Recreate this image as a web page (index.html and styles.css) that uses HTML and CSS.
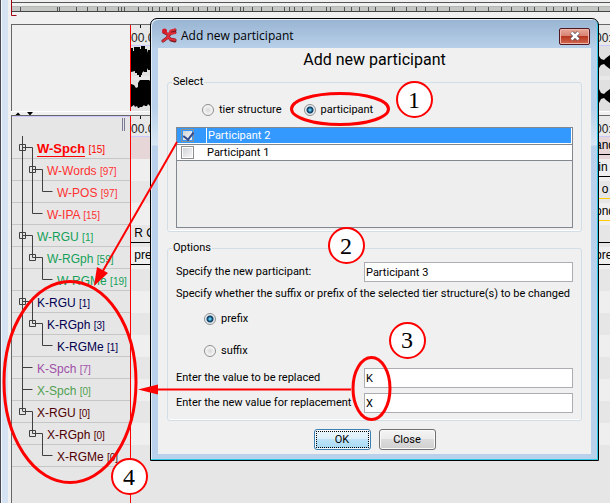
FILE: index.html
```html
<!DOCTYPE html>
<html lang="en">
<head>
<meta charset="utf-8">
<title>Add new participant</title>
<link rel="stylesheet" href="styles.css">
</head>
<body>
<main class="app">
  <div class="overview">
    <svg class="ticks" width="100%" height="24" aria-hidden="true">
      <path d="M11 2.5H4000" stroke="#555"/>
      <path d="M11 6.5H4000" stroke="#b4b8b4"/>
      <path d="M11 9H4000" stroke="#c4c6c4" stroke-width="4"/>
      <path d="M11 11.5H4000" stroke="#444"/>
      <path d="M20.500 7v4M57.500 7v4M59.500 7v4M76.500 7v4M87.500 7v4M97.500 7v4M105.500 7v4M118.500 7v4M121.500 7v4M124.500 7v4M138.500 7v4M148.500 7v4M152.500 7v4M159.500 7v4M166.500 7v4M172.500 7v4M178.500 7v4M193.500 7v4M198.500 7v4M207.500 7v4M215.500 7v4M219.500 7v4M232.500 7v4M240.500 7v4M243.500 7v4M252.500 7v4M261.500 7v4M272.500 7v4M284.500 7v4M289.500 7v4M294.500 7v4M302.500 7v4M311.500 7v4M326.500 7v4M330.500 7v4M344.500 7v4M351.500 7v4M359.500 7v4M368.500 7v4M375.500 7v4M392.500 7v4M394.500 7v4M406.500 7v4M416.500 7v4M425.500 7v4M437.500 7v4M449.500 7v4M463.500 7v4M475.500 7v4M488.500 7v4M501.500 7v4M511.500 7v4M524.500 7v4M527.500 7v4M534.500 7v4M546.500 7v4M553.500 7v4M563.500 7v4M566.500 7v4M571.500 7v4M577.500 7v4M598.500 7v4" stroke="#555"/>
      <path d="M11.500 0v15.500h5" fill="none" stroke="#a00010"/>
    </svg>
  </div>

  <section class="media">
    <div class="media-left"></div>
    <div class="wave">
      <div class="ruler"><span>00.0</span><span class="end">00:</span></div>
      <div class="tracks">
        <svg width="19" height="65" aria-hidden="true"><path d="M0 2h2v3h1V1h6v2h1V0h4v3h2v4l1-3h2v20h-2l-1-2v4h-3v-1l-2 2v2h-1v2H8v-2H6v-2H4v-2l-4 1zM0 38l3 1 2 3 2-1v-4l2-3h9l1 1v25l-2-2-1 2h-2l-1-1-2 2H9l-1 1H7l-1-2-2 1-1-2-3 2z"/></svg>
        <svg width="11" height="65" aria-hidden="true"><path d="M0 10l2 3 3 1 2-2 4-3v14l-4-3-2-2-3 1-2 3zM0 43l2 4 3 1 2-2 4-3v14l-4-3-2-2-3 1-2 4z"/></svg>
      </div>
    </div>
  </section>

  <div class="splitter"><svg width="24" height="4" aria-hidden="true"><path d="M0 3.500 3 .500 6 3.500zM12 0h6l-3 3.500z"/></svg></div>

  <section class="tiers">
    <div class="tree">
      <div class="tree-head"><span class="grip"></span></div>
      <ul class="tree-list">
        <li class="d0 active"><b>W-Spch</b> <small>[15]</small></li>
        <li class="d1 red">W-Words <small>[97]</small></li>
        <li class="d2 red">W-POS <small>[97]</small></li>
        <li class="d1 red">W-IPA <small>[15]</small></li>
        <li class="d0 green">W-RGU <small>[1]</small></li>
        <li class="d1 green">W-RGph <small>[59]</small></li>
        <li class="d2 green">W-RGMe <small>[19]</small></li>
        <li class="d0 navy">K-RGU <small>[1]</small></li>
        <li class="d1 navy">K-RGph <small>[3]</small></li>
        <li class="d2 navy">K-RGMe <small>[1]</small></li>
        <li class="d0 purple">K-Spch <small>[7]</small></li>
        <li class="d0 leaf">X-Spch <small>[0]</small></li>
        <li class="d0 maroon">X-RGU <small>[0]</small></li>
        <li class="d1 maroon">X-RGph <small>[0]</small></li>
        <li class="d2 maroon">X-RGMe <small>[0]</small></li>
      </ul>
      <svg class="lines" width="60" height="350" aria-hidden="true">
        <g fill="none" stroke="#404040">
          <path d="M10.500 19V294M10.500 250.500h10M10.500 272.500h10"/>
          <path d="M10.500 30.500h10v66h10M20.500 52.500h10v22h10"/>
          <path d="M10.500 118.500h10v22h10v22h10"/>
          <path d="M10.500 184.500h10v22h10v22h10"/>
          <path d="M10.500 294.500h10v22h10v22h10"/>
          <path d="M7.500 27.500h6v6h-6zM17.500 49.500h6v6h-6zM7.500 115.500h6v6h-6zM17.500 137.500h6v6h-6zM7.500 181.500h6v6h-6zM17.500 203.500h6v6h-6zM7.500 291.500h6v6h-6zM17.500 313.500h6v6h-6z"/>
        </g>
      </svg>
    </div>
    <div class="timeline">
      <div class="ruler"><span>00.0</span><span class="end">00:</span></div>
      <div class="lane pink"><span></span><span class="end line">and</span></div>
      <div class="lane"><span></span><span class="end line">&nbsp;in</span></div>
      <div class="lane"><span></span><span class="end line gold">&nbsp;&nbsp;o</span></div>
      <div class="lane"><span></span><span class="end line gold">ond</span></div>
      <div class="lane"><span class="line">&nbsp;R G</span><span class="end line"></span></div>
      <div class="lane"><span class="line">&nbsp;pre</span><span class="end line">pre</span></div>
      <div class="lane"></div><div class="lane"></div><div class="lane"></div>
      <div class="lane"></div><div class="lane"></div><div class="lane"></div>
      <div class="lane"></div><div class="lane"></div><div class="lane"></div>
    </div>
  </section>
</main>

<form class="dialog">
  <header class="titlebar">
    <svg width="16" height="16" viewBox="0 0 16 16" aria-hidden="true">
      <path d="M3 4.500 8 7l6-5M8 7l-2 3-4 3M7 8l2 3 5 1M9 5l5-.500M10 12l4 1" fill="none" stroke="#7a1a20" stroke-width="3" stroke-linecap="round"/>
      <path d="M3 4 8 6.500 9.500 2.500 14 1.500M8 6.500 6 10l-4 3M7 8l2 3 5 1M8 6l6-1" fill="none" stroke="#e22c38" stroke-width="2" stroke-linecap="round"/>
      <circle cx="3.500" cy="3" r="2.500" fill="#d41a28"/>
    </svg>
    <span>Add new participant</span>
    <button type="button" class="close" aria-label="Close window">
      <svg width="12" height="10" viewBox="0 0 12 10" aria-hidden="true"><path d="M2.500 1.500l7 7M9.500 1.500l-7 7" stroke="#5a4a58" stroke-width="4"/><path d="M2.500 1.500l7 7M9.500 1.500l-7 7" stroke="#fff" stroke-width="2.500"/></svg>
    </button>
  </header>
  <div class="content">
    <h1>Add new participant</h1>
    <fieldset class="select">
      <legend>Select</legend>
      <div class="kinds">
        <label><input type="radio" name="kind">tier structure</label>
        <label><input type="radio" name="kind" checked>participant</label>
      </div>
      <div class="listbox">
        <table>
          <tr class="chosen"><td><input type="checkbox" id="p2" checked></td><td><label for="p2">Participant 2</label></td></tr>
          <tr><td><input type="checkbox" id="p1"></td><td><label for="p1">Participant 1</label></td></tr>
        </table>
      </div>
    </fieldset>
    <fieldset class="options">
      <legend>Options</legend>
      <div class="row"><label for="name">Specify the new participant:</label><input type="text" id="name" value="Participant 3"></div>
      <p>Specify whether the suffix or prefix of the selected tier structure(s) to be changed</p>
      <div class="affix">
        <label><input type="radio" name="affix" checked>prefix</label>
        <label><input type="radio" name="affix">suffix</label>
      </div>
      <div class="row"><label for="old">Enter the value to be replaced</label><input type="text" id="old" value="K"></div>
      <div class="row"><label for="new">Enter the new value for replacement</label><input type="text" id="new" value="X"></div>
    </fieldset>
    <div class="buttons"><button type="button" class="btn ok">OK</button><button type="button" class="btn">Close</button></div>
  </div>
</form>

<svg class="callouts" width="610" height="503" aria-hidden="true">
  <g fill="none" stroke="#f00" stroke-width="3">
    <ellipse cx="340" cy="109" rx="48.500" ry="15.500"/>
    <ellipse cx="70" cy="382" rx="66" ry="100.500"/>
    <ellipse cx="371.500" cy="388.500" rx="18.500" ry="31"/>
  </g>
  <path d="M177 142 100 276M351 389.500H155" stroke="#f00" stroke-width="2"/>
  <path d="M94 286l3-19 11 6zM138 389.500l20-5v10z" fill="#f00"/>
  <g fill="#fff" stroke="#f00" stroke-width="2">
    <circle cx="414.500" cy="99.500" r="17.500"/><circle cx="346.500" cy="245.500" r="17.500"/><circle cx="407.500" cy="340.500" r="17.500"/><circle cx="129.500" cy="476.500" r="17.500"/>
  </g>
  <g class="digits"><text x="414" y="108">1</text><text x="346" y="254">2</text><text x="407" y="348">3</text><text x="129" y="485">4</text></g>
</svg>
</body>
</html>
```
FILE: styles.css
```css
* { box-sizing: border-box; }

body {
  margin: 0;
  min-height: 100vh;
  position: relative;
  overflow: hidden;
  background: #f0f0f0;
  color: #000;
  font: 11px/14px Roboto, Tahoma, sans-serif;
}

svg { display: block; }

/* Main window */
.app {
  min-height: 100vh;
  display: flex;
  flex-direction: column;
  border-left: 1px solid #4a4a54;
  padding-left: 10px;
  background: linear-gradient(90deg, #f4f8fc 1px, #d6e3f2 1px, #d6e3f2 7px, #f0f0f0 7px);
}

.overview { height: 24px; overflow: hidden; margin-left: -11px; }

.media {
  display: flex;
  height: 87px;
  border-top: 1px solid #666;
  border-left: 1px solid #666;
}

.media-left { width: 118px; }

.wave, .timeline {
  flex: 1;
  min-width: 0;
  border-left: 1px solid #f00;
}

.ruler {
  display: flex;
  justify-content: space-between;
  height: 21px;
  padding-top: 5px;
  background: linear-gradient(#111, #111) 9px 0 / 1px 3px no-repeat, #e8e8e8;
  border-bottom: 1px solid #c8c8ff;
  font: 12px/16px "Liberation Sans", Arial, sans-serif;
  color: #222;
}

.ruler span { width: 19px; overflow: hidden; }
.ruler .end { width: 15px; }

.tracks {
  display: flex;
  justify-content: space-between;
  height: 65px;
  background: linear-gradient(#e0e0e0 30px, #e8e8e8 30px, #e8e8e8 34px, #e0e0e0 34px);
}

.splitter {
  height: 4px;
  border-top: 1px solid #fff;
  padding-left: 4px;
}

.tiers {
  flex: 1;
  display: flex;
  border-top: 1px solid #666;
  border-left: 1px solid #666;
  background: #e6e6e6;
  font: 12px/21px "Liberation Sans", Arial, sans-serif;
}

.tree { width: 118px; position: relative; }

.tree-head {
  height: 21px;
  border-top: 1px solid #c8c8ff;
  display: flex;
  justify-content: flex-end;
  padding: 1px 5px;
}

.grip {
  width: 3px;
  height: 13px;
  border: 1px solid #7a7a96;
  border-width: 0 1px;
}

.tree-list { margin: 0; padding: 0; list-style: none; }

.tree-list li {
  height: 22px;
  border-bottom: 1px solid #c6c6c6;
  padding: 2px 0 0 25px;
  white-space: nowrap;
}

.tree-list .d1 { padding-left: 35px; }
.tree-list .d2 { padding-left: 45px; }
.tree-list small { font-size: 10px; }
.tree-list b { display: inline-block; font-size: 13px; line-height: 15px; border-bottom: 1px solid #f00; }
.active { color: #f00; }
.red { color: #ff3232; }
.green { color: #14a058; }
.navy { color: #000050; }
.purple { color: #a050a8; }
.leaf { color: #50a050; }
.maroon { color: #500000; }

.lines { position: absolute; top: 1px; left: 0; }

.lane {
  display: flex;
  justify-content: space-between;
  height: 22px;
  font-size: 12px;
  line-height: 16px;
}

.lane:nth-child(odd) { background: #efefef; }
.lane.pink { background: #e6d6d8; }
.lane span { width: 19px; height: 18px; overflow: hidden; white-space: nowrap; }
.lane .end { width: 15px; }
.lane .line { border-bottom: 1px solid #000; }
.lane .gold { border-color: #fc0; }

/* Dialog window */
.dialog {
  position: absolute;
  top: 18px;
  left: 150px;
  right: 11px;
  padding: 0 7px 6px;
  border: 1px solid #000;
  border-radius: 7px 7px 0 0;
  background: linear-gradient(#98b4d2, #b9d1ea 30px, #b9d1ea 90px, #d8e6f4 126px, #b9d1ea 127px);
  box-shadow: inset -1px -1px #2cc8e4, inset 1px 1px #e4eef8;
}

.titlebar {
  display: flex;
  align-items: center;
  height: 29px;
  padding: 5px 1px 0 3px;
  font: 12px/16px "Open Sans", "Segoe UI", sans-serif;
}

.titlebar span { flex: 1; margin-left: 4px; }

.close {
  width: 31px;
  height: 17px;
  padding: 0;
  display: grid;
  place-items: center;
  border: 1px solid #501820;
  border-radius: 2px;
  background: linear-gradient(#e8a898, #d88474 45%, #b83820 50%, #d06850);
  box-shadow: inset 0 0 0 1px #f0b8ac;
}

.content {
  padding: 0 9px 4px;
  background: #f0f0f0;
}

h1 {
  margin: 0 0 3px;
  font-size: 16px;
  line-height: 24px;
  font-weight: normal;
  text-align: center;
}

fieldset {
  margin: 0;
  min-width: 0;
  border: 1px solid #d2dde6;
  border-radius: 3px;
  box-shadow: inset 0 -1px #fff;
}

legend { margin-left: -4px; padding: 0 1px; line-height: 14px; }
.select { padding: 11px 8px 3px; margin-bottom: 9px; }
.options { padding: 7px 8px; }

.kinds { display: flex; gap: 22px; height: 20px; margin: 0 0 7px 26px; }
.kinds label, .affix label { display: flex; align-items: center; gap: 5px; height: 20px; }

input[type="radio"] {
  appearance: none;
  width: 12px;
  height: 12px;
  margin: 0;
  border: 1px solid #8e8f8f;
  border-radius: 50%;
  background: radial-gradient(circle, #d8d8d8, #f4f4f4 60%);
}

input[type="radio"]:checked {
  background: radial-gradient(circle at 50% 50%, #5cc8ec 1px, #1c5a84 2px, #123c60 3px, #e8eef2 4px);
}

input[type="checkbox"] {
  appearance: none;
  display: block;
  width: 13px;
  height: 13px;
  margin: 0;
  border: 1px solid #8e8f8f;
  background: linear-gradient(135deg, #d0d4d8, #f6f6f6) content-box #fff;
  padding: 1px;
}

input[type="checkbox"]:checked::before {
  content: "";
  display: block;
  width: 5px;
  height: 8px;
  margin: -1px 0 0 2px;
  border: solid #344c8c;
  border-width: 0 2px 2px 0;
  transform: rotate(38deg);
}

.listbox { height: 101px; border: 1px solid #828790; background: #eee; }
table { width: 100%; border-collapse: collapse; background: #fff; }
tr { height: 16px; border-bottom: 1px solid #828790; }
td { padding: 0; height: 15px; line-height: 15px; }
td:first-child { width: 29px; padding-left: 4px; }
.chosen { background: linear-gradient(#39f, #39f) 0 0 / calc(100% - 1px) 100% no-repeat; color: #fff; }
.chosen label { display: block; border-left: 1px solid #fff; }
td label { padding-left: 1px; }

.row { display: flex; align-items: center; }
.row label { flex: 1; white-space: nowrap; }
.row + .row { margin-top: 5px; }

input[type="text"] {
  width: 53%;
  max-width: 209px;
  height: 20px;
  margin: 0;
  padding: 0 1px;
  border: 1px solid #abadb3;
  background: #fff;
  font: inherit;
}

p { margin: 2px 0 5px; line-height: 20px; white-space: nowrap; }
.affix { display: grid; gap: 12px; margin: 0 0 7px 28px; }

.buttons { display: flex; justify-content: center; gap: 8px; margin-top: 8px; }

.btn {
  width: 57px;
  height: 21px;
  padding: 0;
  border: 1px solid #707070;
  border-radius: 3px;
  background: linear-gradient(#f4f4f4, #ebebeb 48%, #dcdcdc 50%, #cfcfcf);
  box-shadow: inset 0 0 0 1px #fafafa;
  font: inherit;
}

.ok {
  border-color: #3c7fb1;
  background: linear-gradient(#ecf6fc, #dceffa 48%, #bfe4f8 50%, #a4d8f4);
  outline: 1px dotted #000;
  outline-offset: -3px;
}

/* Numbered callouts drawn over the window */
.callouts { position: absolute; top: 0; left: 0; pointer-events: none; }
.digits { font: 24px "Liberation Serif", "Times New Roman", serif; text-anchor: middle; }
```
